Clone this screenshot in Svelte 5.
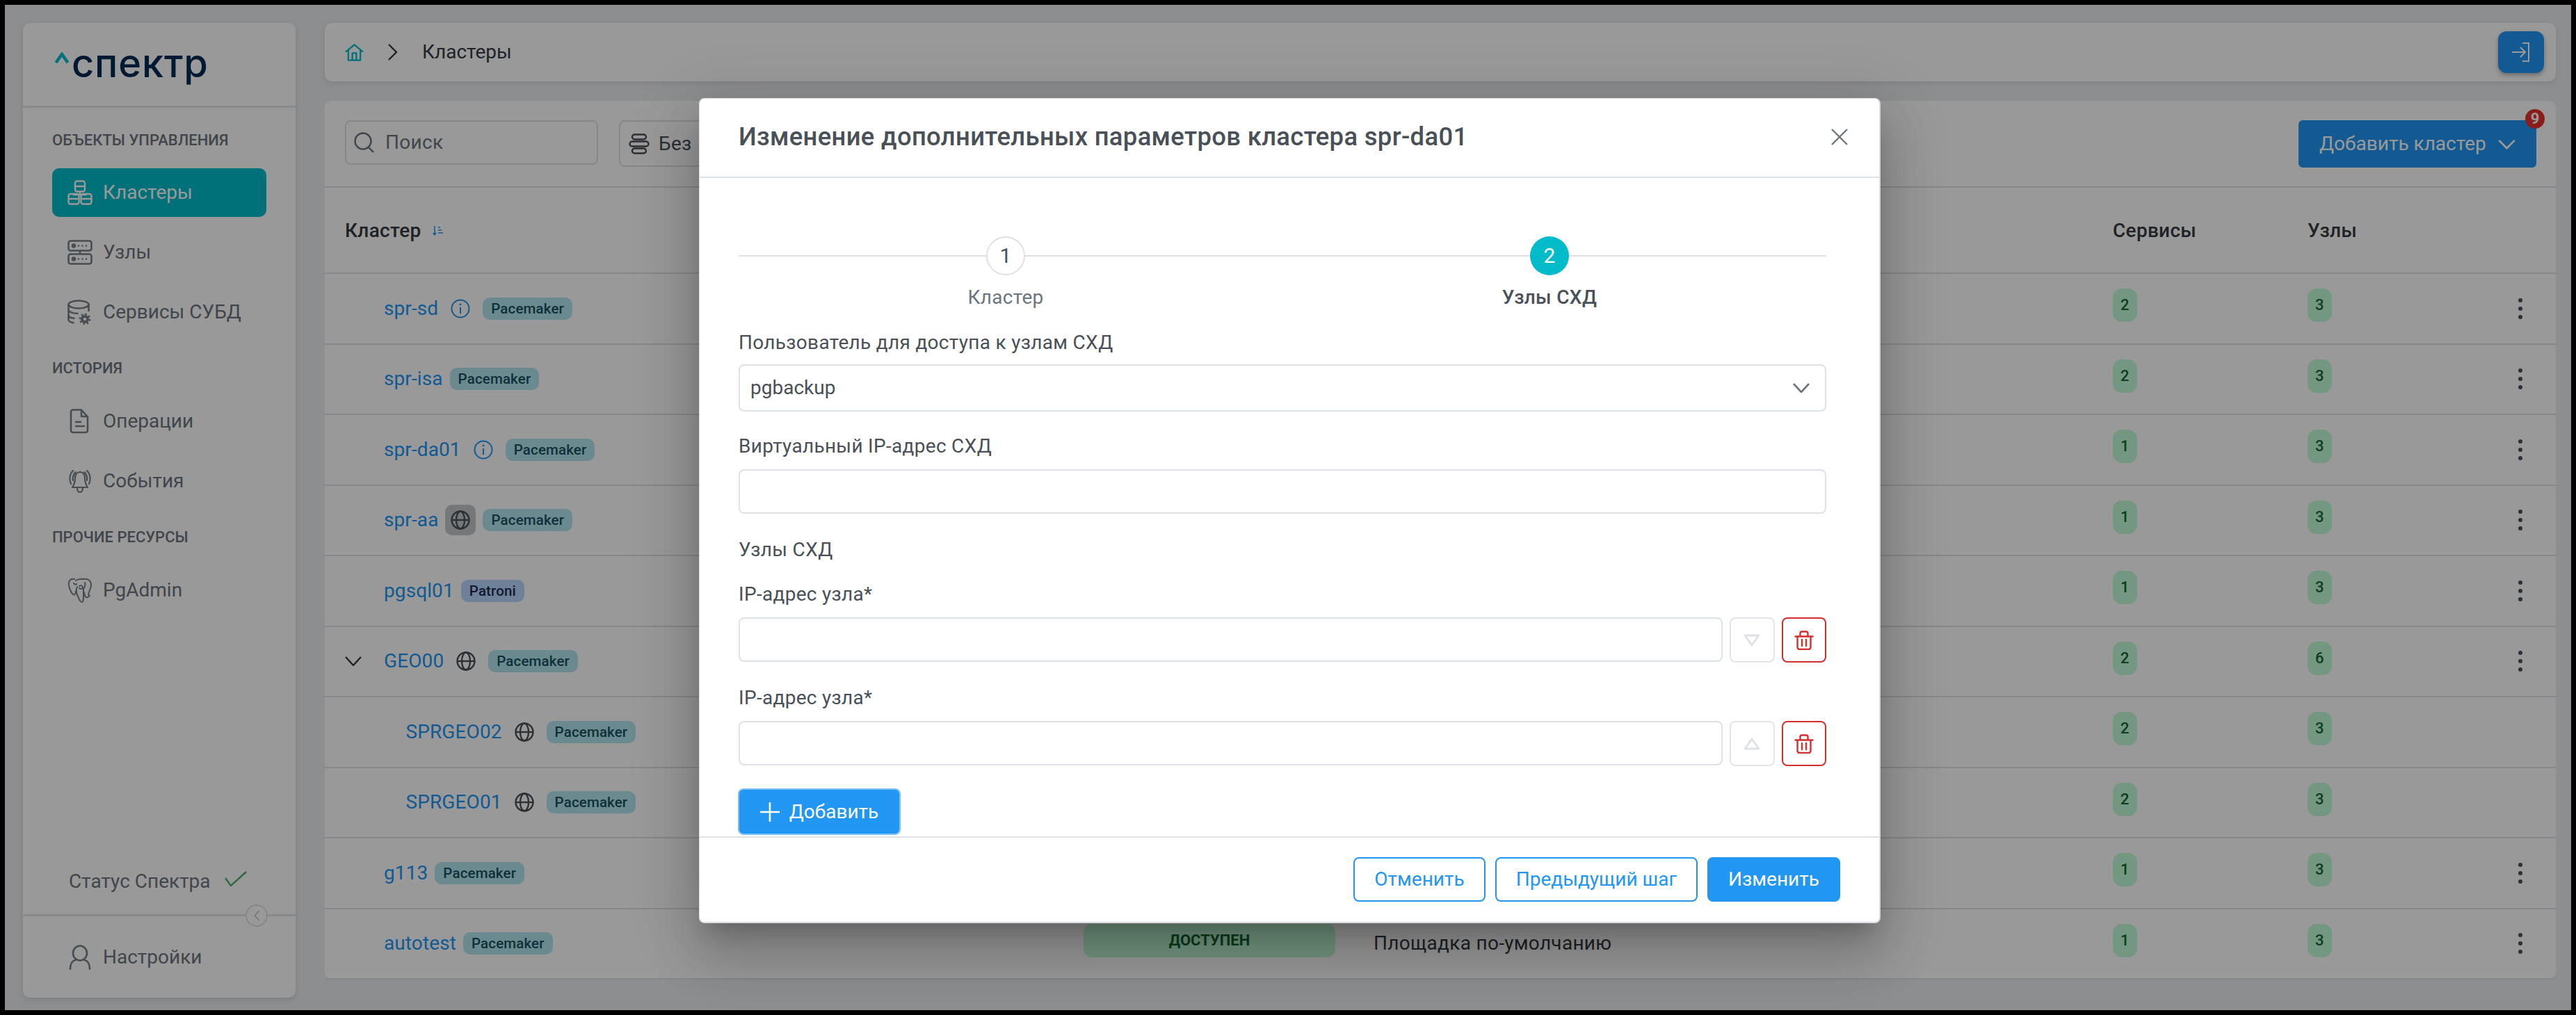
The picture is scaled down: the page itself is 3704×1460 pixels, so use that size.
<script>
  const rows = [
    { name: 'spr-sd', icon: 'info', tag: 'Pacemaker', s: 2, n: 3, menu: true },
    { name: 'spr-isa', tag: 'Pacemaker', s: 2, n: 3, menu: true },
    { name: 'spr-da01', icon: 'info', tag: 'Pacemaker', s: 1, n: 3, menu: true },
    { name: 'spr-aa', icon: 'globe', hover: true, tag: 'Pacemaker', s: 1, n: 3, menu: true },
    { name: 'pgsql01', tag: 'Patroni', s: 1, n: 3, menu: true },
    { name: 'GEO00', icon: 'globe', tag: 'Pacemaker', s: 2, n: 6, menu: true, open: true },
    { name: 'SPRGEO02', icon: 'globe', tag: 'Pacemaker', s: 2, n: 3, child: true },
    { name: 'SPRGEO01', icon: 'globe', tag: 'Pacemaker', s: 2, n: 3, child: true },
    { name: 'g113', tag: 'Pacemaker', s: 1, n: 3, menu: true },
    { name: 'autotest', tag: 'Pacemaker', s: 1, n: 3, menu: true, status: 'ДОСТУПЕН', place: 'Площадка по-умолчанию' }
  ];
</script>

{#snippet trash()}
  <svg class="trash" viewBox="0 0 28 28" fill="none" stroke="#d32f2f" stroke-width="2.4" stroke-linejoin="round" stroke-linecap="round">
    <path d="M1.5 8.5h25M8.5 8V4a2.5 2.5 0 0 1 2.5-2.5h6A2.5 2.5 0 0 1 19.500 4v4M4.500 8.500V24a3 3 0 0 0 3 3h13a3 3 0 0 0 3-3V8.500M11 13v9M17 13v9"/>
  </svg>
{/snippet}

<div class="screen">
  <aside class="side">
    <div class="brand">
      <svg class="caret" viewBox="0 0 20 16" fill="none" stroke="#00bcca" stroke-width="4.500"><path d="M1.500 15 10 3l8.500 12"/></svg>
      <span class="word">спектр</span>
    </div>
    <div class="nav">
      <div class="sect">Объекты управления</div>
      <div class="item active">
        <svg class="ico" viewBox="0 0 36 36" fill="none" stroke="#fff" stroke-width="2.4" stroke-linejoin="round"><rect x="11" y="1.500" width="14" height="15" rx="3"/><path d="M11 9h14M18 16.500V21M8 21h20"/><rect x="1.500" y="20" width="15" height="14.500" rx="3"/><rect x="19.500" y="20" width="15" height="14.500" rx="3"/><path d="M1.500 27h15M19.500 27h15"/></svg>
        <span>Кластеры</span>
      </div>
      <div class="item">
        <svg class="ico" viewBox="0 0 36 36" fill="none" stroke="#76808a" stroke-width="2.600" stroke-linejoin="round"><rect x="1.500" y="1.500" width="33" height="14" rx="3"/><rect x="1.500" y="20.500" width="33" height="14" rx="3"/><path d="M18 15.500v5"/><g fill="#76808a" stroke="none"><circle cx="9" cy="8.500" r="3.200"/><circle cx="9" cy="27.500" r="3.200"/><circle cx="16" cy="8.500" r="1.300"/><circle cx="21.500" cy="8.500" r="1.300"/><circle cx="27" cy="8.500" r="1.300"/><circle cx="16" cy="27.500" r="1.300"/><circle cx="21.500" cy="27.500" r="1.300"/><circle cx="27" cy="27.500" r="1.300"/></g></svg>
        <span>Узлы</span>
      </div>
      <div class="item">
        <svg class="ico" viewBox="0 0 36 36" fill="none" stroke="#76808a" stroke-width="2.600"><ellipse cx="16" cy="7" rx="14.500" ry="5.500"/><path d="M1.500 7v22c0 2 3 3.500 8 4.500M30.500 7v10M1.500 14.500c0 3 6 5.500 14 5.500M1.500 22c0 3 4 4.500 9 5"/><circle cx="25" cy="28" r="6" fill="#76808a" stroke="none"/><circle cx="25" cy="28" r="7" stroke-width="2.800" stroke-dasharray="2.500 3"/><circle cx="25" cy="28" r="2.200" fill="#fff" stroke="none"/></svg>
        <span>Сервисы СУБД</span>
      </div>
      <div class="sect s2">История</div>
      <div class="item">
        <svg class="ico" viewBox="0 0 36 36" fill="none" stroke="#76808a" stroke-width="2.600" stroke-linejoin="round"><path d="M8 1.500h12l9 10V31a3 3 0 0 1-3 3H8a3 3 0 0 1-3-3V4.500a3 3 0 0 1 3-3zM20 2v9h9M11 19h9M11 25h14"/></svg>
        <span>Операции</span>
      </div>
      <div class="item">
        <svg class="ico" viewBox="0 0 36 36" fill="none" stroke="#76808a" stroke-width="2.200" stroke-linecap="round" stroke-linejoin="round"><path d="M18 5c-5 0-7 4-7 9 0 7-2 10-4 13h22c-2-3-4-6-4-13 0-5-2-9-7-9zM14 28c0 4 2 6 4 6s4-2 4-6M8 3C3 8 2 16 5 22M28 3c5 5 6 13 3 19M11.500 5C9 8 7 12 8 17M24.500 5c2.500 3 4.500 7 3.500 12"/></svg>
        <span>События</span>
      </div>
      <div class="sect s2">Прочие ресурсы</div>
      <div class="item">
        <svg class="ico" viewBox="0 0 36 36" fill="none" stroke="#76808a" stroke-width="2" stroke-linecap="round" stroke-linejoin="round"><path d="M10 2C4 1 1 5 2 11c1 5 3 10 6 13 3 2 4-2 4-5M12 4c3-2 6-3 11-2 6-1 11 2 11 8 0 6-3 9-4 14l2 2-3 2c-1 1-3 0-4-2l-1-5M14 13c-2 5-1 11 2 16 1 3 3 6 5 6 1 0 2-2 2-6V16c2-2 3-5 2-9M17 12c3-2 5 0 5 2s-3 3-5 1M9 8c1 2 3 2 4 1"/></svg>
        <span>PgAdmin</span>
      </div>
    </div>
    <div class="status">
      <span>Статус Спектра</span>
      <svg class="check" viewBox="0 0 32 22" fill="none" stroke="#4fb06c" stroke-width="2.400"><path d="M1 10l8 11L31 1"/></svg>
    </div>
    <div class="settings">
      <button class="collapse" aria-label="Свернуть"><svg viewBox="0 0 12 20" fill="none" stroke="#c4c8cc" stroke-width="2"><path d="M10 2 3 10l7 8"/></svg></button>
      <svg class="ico" viewBox="0 0 36 36" fill="none" stroke="#76808a" stroke-width="2.600" stroke-linecap="round"><ellipse cx="18" cy="12" rx="10" ry="10.500"/><path d="M4 35c0-9 3-12 8-13.500M32 35c0-9-3-12-8-13.500"/></svg>
      <span>Настройки</span>
    </div>
  </aside>

  <main class="main">
    <header class="bar">
      <svg class="home" viewBox="0 0 28 26" fill="none" stroke="#00bcca" stroke-width="2.400" stroke-linejoin="round"><path d="M1 12 14 1.500 27 12M5 10v14.500h18V10M11 24.500V14h6v10.500"/></svg>
      <svg class="crumb" viewBox="0 0 15 24" fill="none" stroke="#343a40" stroke-width="2.400"><path d="M2 1l11 11L2 23"/></svg>
      <span class="crumbtext">Кластеры</span>
      <button class="login" aria-label="Выход">
        <svg viewBox="0 0 28 28" fill="none" stroke="#fff" stroke-width="2"><path d="M1 14h19M13 7l7 7-7 7M16 1h9v26h-9"/></svg>
      </button>
    </header>

    <section class="card">
      <div class="tools">
        <div class="search">
          <svg viewBox="0 0 30 30" fill="none" stroke="#6c757d" stroke-width="2.400"><circle cx="13" cy="13" r="11.500"/><path d="m21 22 7 7"/></svg>
          <span>Поиск</span>
        </div>
        <div class="group">
          <svg viewBox="0 0 30 30" fill="none" stroke="#495057" stroke-width="2.400"><rect x="5" y="1.500" width="20" height="7" rx="3.500"/><rect x="1.500" y="11.500" width="27" height="7" rx="3.500"/><rect x="5" y="21.500" width="20" height="7" rx="3.500"/></svg>
          <span>Без</span>
        </div>
        <button class="addcl">
          Добавить кластер
          <svg viewBox="0 0 28 16" fill="none" stroke="#fff" stroke-width="3"><path d="M2 2l12 12L26 2"/></svg>
          <span class="nine">9</span>
        </button>
      </div>

      <div class="grid head">
        <div class="hname">Кластер
          <svg class="sort" viewBox="0 0 16 14" fill="none" stroke="#2196f3" stroke-width="1.500"><path d="M3 0v13M1 10l2 3 2-3M8 2h3M8 6h5M8 10h7"/></svg>
        </div>
        <div></div><div></div>
        <div>Сервисы</div>
        <div>Узлы</div>
      </div>

      {#each rows as r}
        <div class="grid row">
          <div class="cname" class:child={r.child}>
            <span class="toggle">
              {#if r.open}
                <svg viewBox="0 0 24 14" fill="none" stroke="#343a40" stroke-width="2.400"><path d="M1 1l11 12L23 1"/></svg>
              {/if}
            </span>
            <a class="link" href="#top">{r.name}</a>
            {#if r.icon === 'info'}
              <span class="ibox"><svg viewBox="0 0 28 28" fill="none" stroke="#2196f3" stroke-width="2"><circle cx="14" cy="14" r="12.500"/><path d="M14 12v9"/><circle cx="14" cy="8" r="1.400" fill="#2196f3" stroke="none"/></svg></span>
            {:else if r.icon === 'globe'}
              <span class="ibox" class:hover={r.hover}><svg viewBox="0 0 28 28" fill="none" stroke="#495057" stroke-width="2.400"><circle cx="14" cy="14" r="12.500"/><ellipse cx="14" cy="14" rx="6" ry="12.500"/><path d="M1.500 14h25"/></svg></span>
            {/if}
            <span class="tag" class:patroni={r.tag === 'Patroni'}>{r.tag}</span>
          </div>
          <div>{#if r.status}<span class="state">{r.status}</span>{/if}</div>
          <div class="place">{r.place ?? ''}</div>
          <div><span class="num">{r.s}</span></div>
          <div><span class="num">{r.n}</span></div>
          <div class="act">{#if r.menu}<span class="kebab"><i></i><i></i><i></i></span>{/if}</div>
        </div>
      {/each}
    </section>
  </main>

  <div class="overlay">
    <div class="modal">
      <div class="mhead">
        <h2>Изменение дополнительных параметров кластера spr-da01</h2>
        <svg class="close" viewBox="0 0 24 24" fill="none" stroke="#6c757d" stroke-width="2.400"><path d="M1 1l22 22M23 1 1 23"/></svg>
      </div>
      <div class="mbody">
        <div class="stepper">
          <div class="step"><span class="dot">1</span><span class="lab">Кластер</span></div>
          <div class="step on"><span class="dot">2</span><span class="lab">Узлы СХД</span></div>
        </div>
        <label class="flabel" for="u">Пользователь для доступа к узлам СХД</label>
        <div class="select" id="u">
          <span>pgbackup</span>
          <svg viewBox="0 0 24 14" fill="none" stroke="#6c757d" stroke-width="2.600"><path d="M1 1l11 12L23 1"/></svg>
        </div>
        <div class="flabel gap">Виртуальный IP-адрес СХД</div>
        <div class="input"></div>
        <div class="flabel gap plain">Узлы СХД</div>
        <div class="flabel ip">IP-адрес узла*</div>
        <div class="line">
          <div class="input"></div>
          <button class="sq" aria-label="Вниз"><svg viewBox="0 0 24 18" fill="none" stroke="#dee2e6" stroke-width="2.800" stroke-linejoin="round"><path d="M2 2h20L12 16z"/></svg></button>
          <button class="sq del" aria-label="Удалить">{@render trash()}</button>
        </div>
        <div class="flabel ip2">IP-адрес узла*</div>
        <div class="line">
          <div class="input"></div>
          <button class="sq" aria-label="Вверх"><svg viewBox="0 0 24 18" fill="none" stroke="#dee2e6" stroke-width="2.800" stroke-linejoin="round"><path d="M2 16h20L12 2z"/></svg></button>
          <button class="sq del" aria-label="Удалить">{@render trash()}</button>
        </div>
        <button class="plus">
          <svg viewBox="0 0 28 28" fill="none" stroke="#fff" stroke-width="2.600"><path d="M14 0v28M0 14h28"/></svg>
          Добавить
        </button>
      </div>
      <div class="mfoot">
        <button class="ghost w1">Отменить</button>
        <button class="ghost w2">Предыдущий шаг</button>
        <button class="solid">Изменить</button>
      </div>
    </div>
  </div>
</div>

<style>
  :global(body) { margin: 0; background: #000; }
  * { box-sizing: border-box; }
  .screen {
    position: relative; margin: 7px; width: 3690px; height: 1446px; overflow: hidden;
    background: #eaedef; display: grid; grid-template-columns: 392px 3208px; column-gap: 42px;
    padding: 26px 0 18px 26px; font: 400 28px/32px Roboto, sans-serif; color: #495057;
  }
  button { font: inherit; cursor: pointer; }

  .side { position: relative; background: #fff; border-radius: 10px; box-shadow: 0 3px 10px rgba(0,0,0,.12); display: flex; flex-direction: column; }
  .brand { height: 122px; border-bottom: 3px solid #e4e7ea; display: flex; padding-left: 46px; flex: none; }
  .caret { width: 20px; height: 16px; margin-top: 42px; flex: none; }
  .word { font: 500 56px/1 Inter, sans-serif; color: #002b55; margin: 30px 0 0 4px; letter-spacing: .8px; }
  .nav { padding: 33px 42px 0; flex: 1; }
  .sect { font-size: 22px; line-height: 28px; font-weight: 500; color: #6c757d; text-transform: uppercase; height: 28px; margin-bottom: 26px; white-space: nowrap; }
  .s2 { margin-top: 32px; margin-bottom: 27px; }
  .item { height: 70px; display: flex; align-items: center; gap: 15px; padding-left: 22px; border-radius: 10px; margin-bottom: 16px; color: #6c757d; }
  .ico { width: 36px; height: 36px; flex: none; }
  .active { background: #00bcca; color: #fff; }
  .status { height: 92px; flex: none; padding: 0 0 2px 66px; display: flex; align-items: center; gap: 20px; color: #6c757d; margin-top: -2px; }
  .check { width: 32px; height: 22px; margin-top: -8px; }
  .settings { position: relative; flex: none; border-top: 3px solid #e4e7ea; height: 120px; display: flex; align-items: center; gap: 15px; padding: 0 0 0 64px; color: #6c757d; }
  .collapse { position: absolute; right: 40px; top: -17px; width: 32px; height: 32px; padding: 0 9px; background: #fff; border: 2px solid #dfe2e5; border-radius: 50%; display: flex; align-items: center; }
  .collapse svg { width: 12px; height: 20px; }

  .main { display: flex; flex-direction: column; gap: 28px; }
  .bar { height: 84px; flex: none; background: #fff; border-radius: 10px; box-shadow: 0 3px 10px rgba(0,0,0,.1); display: flex; align-items: center; padding: 0 17px 0 29px; color: #343a40; }
  .home { width: 27px; height: 25px; }
  .crumb { width: 15px; height: 24px; margin-left: 34px; }
  .crumbtext { margin-left: 35px; }
  .login { margin-left: auto; width: 66px; height: 60px; border: 0; background: #2196f3; border-radius: 12px; box-shadow: 0 3px 6px rgba(0,0,0,.3); padding: 0; display: flex; align-items: center; justify-content: center; }
  .login svg { width: 28px; height: 28px; }
  .card { height: 1263px; background: #fff; border-radius: 10px; letter-spacing: .3px; }
  .tools { height: 125px; border-bottom: 2px solid #dee2e6; position: relative; display: flex; padding: 28px 28px 0 29px; align-items: flex-start; }
  .search { width: 364px; height: 64px; border: 2px solid #dee2e6; border-radius: 8px; display: flex; align-items: center; padding-left: 11px; gap: 15px; color: #6c757d; }
  .search svg { width: 30px; height: 30px; }
  .group { margin-left: 30px; width: 420px; height: 67px; border: 2px solid #dee2e6; border-radius: 8px; display: flex; align-items: center; padding-left: 12px; gap: 13px; white-space: nowrap; }
  .group svg { width: 30px; height: 30px; }
  .addcl { position: relative; margin-left: auto; width: 342px; height: 68px; border: 0; border-radius: 6px; background: #2196f3; color: #fff; display: flex; align-items: center; padding: 0 0 0 30px; white-space: nowrap; letter-spacing: 0; }
  .addcl svg { width: 27px; height: 15px; margin-left: 16px; }
  .nine { position: absolute; top: -16px; right: -12px; width: 28px; height: 28px; border-radius: 50%; background: #e62f2f; color: #fff; font: 700 22px/28px Roboto, sans-serif; text-align: center; }

  .grid { display: grid; grid-template-columns: 1092px 416px 1063px 280px 280px 77px; align-items: center; }
  .head { height: 124px; padding-top: 2px; border-bottom: 2px solid #dee2e6; font-weight: 500; color: #343a40; }
  .hname { padding-left: 29px; display: flex; align-items: center; gap: 16px; }
  .sort { width: 16px; height: 14px; }
  .row { height: 101.500px; border-bottom: 2px solid #dee2e6; }
  .cname { display: flex; align-items: center; gap: 10px; padding-left: 29px; }
  .cname.child { padding-left: 60.500px; }
  .toggle { width: 46px; height: 14px; flex: none; display: flex; }
  .toggle svg { width: 24px; height: 14px; }
  .link { color: #2196f3; text-decoration: none; letter-spacing: .1px; }
  .ibox { width: 44px; height: 44px; border-radius: 10px; display: flex; align-items: center; justify-content: center; flex: none; }
  .ibox svg { width: 28px; height: 28px; }
  .ibox.hover { background: #c4c7ca; }
  .tag { height: 32px; padding: 0 12px; border-radius: 10px; background: #b2e6ef; color: #16505f; font: 500 20.500px/32px Roboto, sans-serif; letter-spacing: .15px; flex: none; }
  .tag.patroni { background: #b9d6ff; color: #1c2c4f; }
  .state { display: block; width: 362px; height: 48px; margin-left: -1px; border-radius: 12px; background: #c0fcd5; color: #146633; font: 700 22px/48px Roboto, sans-serif; letter-spacing: 0; text-align: center; margin-top: -8px; }
  .place { color: #343a40; white-space: nowrap; }
  .num { display: flex; align-items: center; justify-content: center; width: 35px; height: 48px; border-radius: 13px; background: #c0fcd5; color: #146633; font: 500 22px/48px Roboto, sans-serif; margin-top: -9px; }
  .act { display: flex; justify-content: center; }
  .kebab { display: flex; flex-direction: column; gap: 6px; margin-left: -26px; }
  .kebab i { width: 6px; height: 6px; border-radius: 50%; background: #495057; }

  .overlay { position: absolute; inset: 0; background: rgba(0,0,0,.4); padding: 134px 0 0 998px; }
  .modal {
    width: 1699px; height: 1187px; background: #fff; border: 2px solid #d9dde1; border-top-width: 1px; border-left-width: 1px; border-radius: 8px;
    box-shadow: 0 22px 30px -14px rgba(0,0,0,.2), 0 48px 76px 6px rgba(0,0,0,.14), 0 18px 92px 16px rgba(0,0,0,.12);
    display: flex; flex-direction: column; overflow: hidden; color: #495057; letter-spacing: .3px;
  }
  .mhead { height: 114px; flex: none; border-bottom: 2px solid #dee2e6; display: flex; align-items: center; justify-content: space-between; padding: 0 45px 2px 56px; }
  h2 { margin: 0; font: 500 36.500px/44px Roboto, sans-serif; letter-spacing: .3px; }
  .close { width: 24px; height: 24px; }
  .mbody { flex: 1; min-height: 0; padding: 84px 76px 0 56px; display: flex; flex-direction: column; align-items: stretch; }
  .stepper { position: relative; display: grid; grid-template-columns: 782px 782px; margin: 0 0 32px -7px; height: 105px; }
  .stepper::before { content: ""; position: absolute; left: 7px; right: 0; top: 27px; height: 2px; background: #dee2e6; }
  .step { position: relative; display: flex; flex-direction: column; align-items: center; gap: 16px; color: #6c757d; }
  .dot { width: 56px; height: 56px; border-radius: 50%; border: 2px solid #dee2e6; background: #fff; display: flex; align-items: center; justify-content: center; font-size: 30px; color: #495057; }
  .step.on { color: #495057; font-weight: 500; }
  .step.on .dot { background: #00bcca; border: 0; color: #fff; font-weight: 400; }
  .flabel { display: block; margin-bottom: 15px; }
  .gap { margin-top: 34px; margin-bottom: 17px; }
  .plain { margin-top: 36px; margin-bottom: 0; }
  .ip { margin-top: 32px; margin-bottom: 17px; }
  .ip2 { margin-top: 36px; margin-bottom: 17px; }
  .select { height: 68px; border: 2px solid #dee2e6; border-radius: 8px; display: flex; align-items: center; justify-content: space-between; padding: 0 22px 0 15px; flex: none; letter-spacing: 0; }
  .select svg { width: 24px; height: 14px; }
  .input { height: 64px; border: 2px solid #dee2e6; border-radius: 8px; flex: 1 0 64px; background: #fff; }
  .mbody > .input { flex: none; }
  .line { display: flex; gap: 10px; height: 64px; flex: none; }
  .sq { width: 64.500px; height: 65px; flex: none; border: 2px solid #e3e6e9; border-radius: 8px; background: #fff; padding: 0; display: flex; align-items: center; justify-content: center; }
  .sq svg { width: 24px; height: 18px; }
  .sq.del { border-color: #d32f2f; }
  .sq svg.trash { width: 28px; height: 28px; }
  .plus { align-self: flex-start; margin: 33px 0 0 -1px; width: 234px; height: 67px; border: 2px solid #7fc2f8; border-radius: 8px; background: #2196f3; color: #fff; display: flex; align-items: center; justify-content: center; gap: 14px; padding: 0; letter-spacing: 0; }
  .plus svg { width: 28px; height: 28px; }
  .mfoot { height: 123px; flex: none; border-top: 2px solid #dee2e6; display: flex; justify-content: flex-end; align-items: flex-start; gap: 14px; padding: 28px 56px 0 0; }
  .mfoot button { height: 64px; border-radius: 8px; padding: 0; letter-spacing: 0; }
  .ghost { border: 2px solid #2196f3; background: #fff; color: #2196f3; }
  .w1 { width: 190px; }
  .w2 { width: 291px; }
  .solid { width: 191px; border: 0; background: #2196f3; color: #fff; }
</style>
